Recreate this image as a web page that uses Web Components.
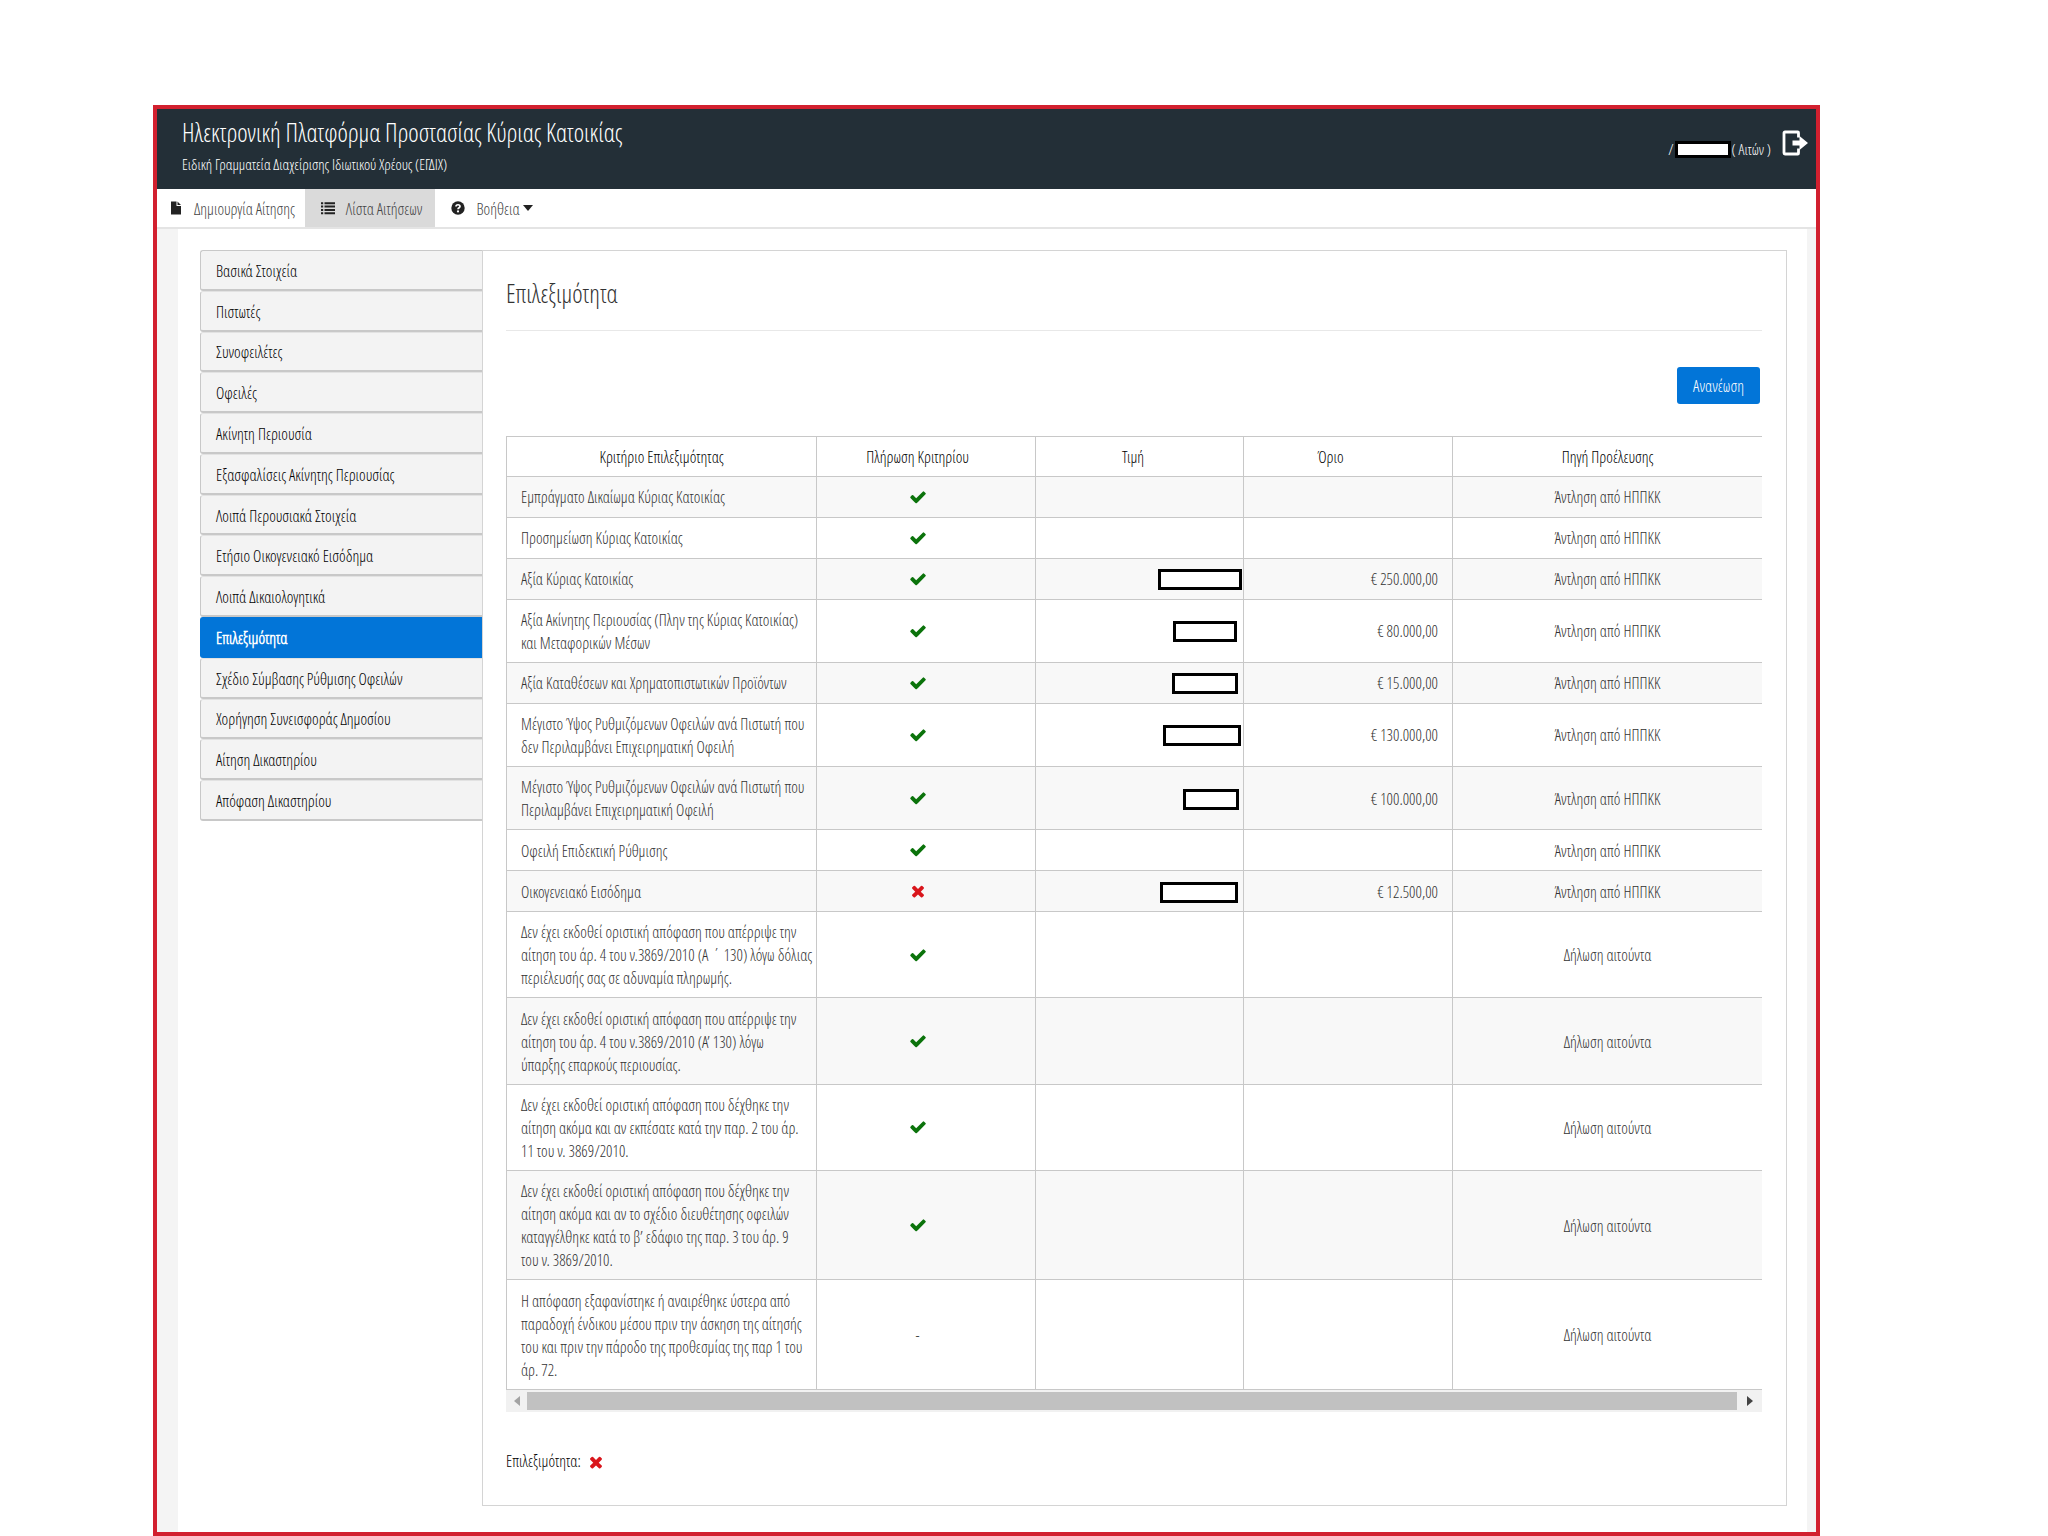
<!DOCTYPE html>
<html lang="el">
<head>
<meta charset="utf-8">
<meta name="viewport" content="width=device-width, initial-scale=1">
<title>Ηλεκτρονική Πλατφόρμα Προστασίας Κύριας Κατοικίας</title>
<style>
  body {
    margin: 0;
    background: #fff;
    color: #333;
    font: 16px/23px "Open Sans Condensed Light", "Open Sans Condensed", "Open Sans", sans-serif;
    --line: #c8c8c8;
    --accent: #0275d8;
    --frame: #d2202f;
  }
</style>
</head>
<body>
<platform-app></platform-app>

<script>
const define = (name, html, setup) => {
  const tpl = document.createElement('template');
  tpl.innerHTML = html;
  customElements.define(name, class extends HTMLElement {
    connectedCallback() {
      if (this.shadowRoot) return;
      const root = this.attachShadow({ mode: 'open' });
      root.append(tpl.content.cloneNode(true));
      if (setup) setup(this, root);
    }
  });
};

/* Icons */
const ICONS = {
  check: ['0 0 1792 1792', '<path d="M1671 566q0 40-28 68l-724 724-136 136q-28 28-68 28t-68-28l-136-136-362-362q-28-28-28-68t28-68l136-136q28-28 68-28t68 28l294 295 656-657q28-28 68-28t68 28l136 136q28 28 28 68z"/>'],
  times: ['0 0 1792 1792', '<path d="M1490 1322q0 40-28 68l-136 136q-28 28-68 28t-68-28l-294-294-294 294q-28 28-68 28t-68-28l-136-136q-28-28-28-68t28-68l294-294-294-294q-28-28-28-68t28-68l136-136q28-28 68-28t68 28l294 294 294-294q28-28 68-28t68 28l136 136q28 28 28 68t-28 68l-294 294 294 294q28 28 28 68z"/>'],
  file: ['0 0 14 14', '<path d="M2 .5h5.500v4.500h4.500v8.500h-10zM8.500.500l3.500 3.500h-3.500z"/>'],
  list: ['0 0 14 14', '<path d="M0 1.300h2.200v2H0zM3.500 1.300H14v2H3.500zM0 4.600h2.200v2H0zM3.500 4.600H14v2H3.500zM0 7.900h2.200v2H0zM3.500 7.900H14v2H3.500zM0 11.200h2.200v2H0zM3.500 11.200H14v2H3.500z"/>'],
  help: ['0 0 14 14', '<circle cx="7" cy="7" r="6.700"/><path d="M5 5.400C5 3.200 9 3.200 9 5.400 9 6.800 7 6.700 7 8.300" fill="none" stroke="#fff" stroke-width="1.700"/><circle cx="7" cy="10.400" r="1.100" fill="#fff"/>'],
  caret: ['0 0 10 6', '<path d="M0 0h10l-5 6z"/>'],
  exit: ['0 0 26 26', '<path d="M16.500 7.500V2.800Q16.500 2 15.700 2H3Q2 2 2 3v20Q2 24 3 24h12.700Q16.500 24 16.500 23.200V18.500" fill="none" stroke="currentColor" stroke-width="2.800"/><path d="M10.500 10.500H17.500V6L26 13l-8.500 7v-4.500H10.500z"/>'],
  left: ['0 0 6 10', '<path d="M6 0v10L0 5z"/>'],
  right: ['0 0 6 10', '<path d="M0 0v10l6-5z"/>']
};
define('ui-icon', `<style>
  :host { display: inline-flex; width: 18px; height: 18px; }
  svg { width: 100%; height: 100%; display: block; fill: currentColor; }
</style>`, (el, root) => {
  const [box, body] = ICONS[el.getAttribute('name')];
  root.innerHTML += `<svg viewBox="${box}" aria-hidden="true">${body}</svg>`;
});

/* Blanked-out value */
define('redacted-value', `<style>
  :host { display: block; box-sizing: border-box; border: 3px solid #000; background: #fff; height: 21px; }
</style>`, (el) => {
  el.style.width = el.getAttribute('width') + 'px';
});

define('platform-header', `<style>
  :host { display: flex; justify-content: space-between; box-sizing: border-box; height: 80px; padding: 6px 8px 0 25px; background: #232f37; color: #fff; }
  h1 { margin: 0 0 4px; font-size: 25px; line-height: 34px; font-weight: inherit; }
  p { margin: 0; font-size: 15px; line-height: 22px; }
  .user { display: flex; align-items: center; height: 60px; padding-top: 8px; font-size: 15px; line-height: 22px; box-sizing: border-box; }
  redacted-value { height: 17px; margin: 0 1px; }
  button { all: unset; display: flex; margin: 0 0 12px 11px; color: #fff; cursor: pointer; }
  button ui-icon { width: 26px; height: 26px; }
</style>
<div><h1>Ηλεκτρονική Πλατφόρμα Προστασίας Κύριας Κατοικίας</h1>
<p>Ειδική Γραμματεία Διαχείρισης Ιδιωτικού Χρέους (ΕΓΔΙΧ)</p></div>
<div class="user"><span>/</span><redacted-value width="56"></redacted-value><span>( Αιτών )</span>
<button type="button" aria-label="Έξοδος"><ui-icon name="exit"></ui-icon></button></div>`);

define('nav-item', `<style>
  :host { display: flex; }
  a { display: flex; align-items: center; padding: 2px 10px 0 12px; color: #444; text-decoration: none; }
  :host([active]) a { background: #dadada; padding: 2px 13px 0 16px; }
  ui-icon { color: #222; margin-bottom: 2px; }
  .icon { width: 14px; height: 14px; margin-right: 11px; }
  .caret { width: 10px; height: 6px; margin-left: 3px; }
</style><a href="#"><slot></slot></a>`, (el, root) => {
  const a = root.querySelector('a');
  a.insertAdjacentHTML('afterbegin', `<ui-icon class="icon" name="${el.getAttribute('icon')}"></ui-icon>`);
  if (el.hasAttribute('menu')) a.insertAdjacentHTML('beforeend', '<ui-icon class="caret" name="caret"></ui-icon>');
});

define('platform-nav', `<style>
  :host { display: block; background: #fff; border-bottom: 2px solid #e4e4e4; }
  nav { display: flex; height: 38px; }
  nav-item[menu] { margin-left: 4px; }
</style><nav><nav-item icon="file">Δημιουργία Αίτησης</nav-item><nav-item icon="list" active>Λίστα Αιτήσεων</nav-item><nav-item icon="help" menu>Βοήθεια</nav-item></nav>`);

const STEPS = ['Βασικά Στοιχεία', 'Πιστωτές', 'Συνοφειλέτες', 'Οφειλές', 'Ακίνητη Περιουσία',
  'Εξασφαλίσεις Ακίνητης Περιουσίας', 'Λοιπά Περουσιακά Στοιχεία', 'Ετήσιο Οικογενειακό Εισόδημα',
  'Λοιπά Δικαιολογητικά', 'Επιλεξιμότητα', 'Σχέδιο Σύμβασης Ρύθμισης Οφειλών',
  'Χορήγηση Συνεισφοράς Δημοσίου', 'Αίτηση Δικαστηρίου', 'Απόφαση Δικαστηρίου'];
define('step-menu', `<style>
  :host { display: block; }
  ul { list-style: none; margin: 0; padding: 0; display: flex; flex-direction: column; height: 571px; }
  li { flex: 1; display: flex; }
  a { flex: 1; display: flex; align-items: center; padding: 3px 15px 0; color: #000; text-decoration: none;
      background: #f3f3f3; border: 1px solid var(--line); border-bottom-width: 2px; border-right: 0; border-top-color: #e2e2e2; border-radius: 3px 0 0 3px; }
  li:first-child a { border-top-color: var(--line); }
  a[aria-current] { background: var(--accent); border-color: var(--accent); color: #fff; font-weight: bold; }
</style><ul></ul>`, (el, root) => {
  root.querySelector('ul').innerHTML = STEPS.map(s =>
    `<li><a href="#"${s === 'Επιλεξιμότητα' ? ' aria-current="step"' : ''}>${s}</a></li>`).join('');
});

/* criterion, fulfilled, [hidden value width, right margin], limit, source */
const PULL = 'Άντληση από ΗΠΠΚΚ', DECL = 'Δήλωση αιτούντα';
const ROWS = [
  ['Εμπράγματο Δικαίωμα Κύριας Κατοικίας', 'check', null, '', PULL],
  ['Προσημείωση Κύριας Κατοικίας', 'check', null, '', PULL],
  ['Αξία Κύριας Κατοικίας', 'check', [84, 1], '€ 250.000,00', PULL],
  ['Αξία Ακίνητης Περιουσίας (Πλην της Κύριας Κατοικίας)<br>και Μεταφορικών Μέσων', 'check', [64, 6], '€ 80.000,00', PULL],
  ['Αξία Καταθέσεων και Χρηματοπιστωτικών Προϊόντων', 'check', [66, 5], '€ 15.000,00', PULL],
  ['Μέγιστο Ύψος Ρυθμιζόμενων Οφειλών ανά Πιστωτή που<br>δεν Περιλαμβάνει Επιχειρηματική Οφειλή', 'check', [78, 2], '€ 130.000,00', PULL],
  ['Μέγιστο Ύψος Ρυθμιζόμενων Οφειλών ανά Πιστωτή που<br>Περιλαμβάνει Επιχειρηματική Οφειλή', 'check', [56, 4], '€ 100.000,00', PULL],
  ['Οφειλή Επιδεκτική Ρύθμισης', 'check', null, '', PULL],
  ['Οικογενειακό Εισόδημα', 'times', [78, 5], '€ 12.500,00', PULL],
  ['Δεν έχει εκδοθεί οριστική απόφαση που απέρριψε την<br>αίτηση του άρ. 4 του ν.3869/2010 (Α ΄ 130) λόγω δόλιας<br>περιέλευσής σας σε αδυναμία πληρωμής.', 'check', null, '', DECL],
  ['Δεν έχει εκδοθεί οριστική απόφαση που απέρριψε την<br>αίτηση του άρ. 4 του ν.3869/2010 (Α’ 130) λόγω<br>ύπαρξης επαρκούς περιουσίας.', 'check', null, '', DECL],
  ['Δεν έχει εκδοθεί οριστική απόφαση που δέχθηκε την<br>αίτηση ακόμα και αν εκπέσατε κατά την παρ. 2 του άρ.<br>11 του ν. 3869/2010.', 'check', null, '', DECL],
  ['Δεν έχει εκδοθεί οριστική απόφαση που δέχθηκε την<br>αίτηση ακόμα και αν το σχέδιο διευθέτησης οφειλών<br>καταγγέλθηκε κατά το β’ εδάφιο της παρ. 3 του άρ. 9<br>του ν. 3869/2010.', 'check', null, '', DECL],
  ['Η απόφαση εξαφανίστηκε ή αναιρέθηκε ύστερα από<br>παραδοχή ένδικου μέσου πριν την άσκηση της αίτησής<br>του και πριν την πάροδο της προθεσμίας της παρ 1 του<br>άρ. 72.', '', null, '', DECL]
];
define('criteria-table', `<style>
  :host { display: block; overflow: hidden; }
  table { width: 100%; height: 954px; table-layout: fixed; border-collapse: collapse; }
  th, td { border: 1px solid var(--line); padding: 9px 14px 7px; text-align: center; vertical-align: middle; white-space: nowrap; }
  th:last-child, td:last-child { border-right: 0; }
  th { color: #000; font-weight: inherit; }
  th:nth-child(2), td:nth-child(2) { padding-right: 31px; }
  th:nth-child(3) { padding-right: 27px; }
  th:nth-child(4) { padding-right: 49px; }
  td:nth-child(1) { text-align: left; padding-right: 0; }
  td:nth-child(3) { padding: 2px 0 0; }
  td:nth-child(4) { text-align: right; }
  tbody tr:nth-child(odd) { background: #f8f8f8; }
  ui-icon { vertical-align: middle; margin-bottom: 4px; }
  ui-icon[name=check] { color: #0b730b; }
  ui-icon[name=times] { color: #d9161c; }
  redacted-value { margin-left: auto; }
</style>
<table><colgroup><col style="width:310px"><col style="width:219px"><col style="width:208px"><col style="width:209px"><col></colgroup>
<thead><tr><th scope="col">Κριτήριο Επιλεξιμότητας</th><th scope="col">Πλήρωση Κριτηρίου</th><th scope="col">Τιμή</th><th scope="col">Όριο</th><th scope="col">Πηγή Προέλευσης</th></tr></thead>
<tbody></tbody></table>`, (el, root) => {
  root.querySelector('tbody').innerHTML = ROWS.map(([name, mark, hidden, limit, source]) =>
    `<tr><td>${name}</td><td>${mark ? `<ui-icon name="${mark}"></ui-icon>` : '-'}</td><td>${
      hidden ? `<redacted-value width="${hidden[0]}" style="margin-right:${hidden[1]}px"></redacted-value>` : ''
    }</td><td>${limit}</td><td>${source}</td></tr>`).join('');
});

define('scroll-track', `<style>
  :host { display: flex; align-items: center; height: 22px; background: #f1f1f1; }
  button { all: unset; display: flex; align-items: center; justify-content: center; width: 21px; height: 22px; color: #a3a3a3; }
  button:last-child { width: 25px; color: #444; }
  ui-icon { width: 6px; height: 10px; }
  .thumb { flex: 1; height: 18px; background: #c1c1c1; }
</style><button type="button" aria-label="Αριστερά"><ui-icon name="left"></ui-icon></button><div class="thumb"></div><button type="button" aria-label="Δεξιά"><ui-icon name="right"></ui-icon></button>`);

define('eligibility-panel', `<style>
  :host { display: flex; flex-direction: column; box-sizing: border-box; border: 1px solid #d4d4d4; padding: 25px 24px 0 23px; background: #fff; }
  h2 { margin: 0; padding-bottom: 20px; border-bottom: 1px solid #e8e8e8; font-size: 25px; line-height: 34px; font-weight: inherit; }
  .tools { display: flex; justify-content: flex-end; margin: 36px 2px 32px 0; }
  button { width: 83px; height: 37px; padding: 2px 0 0; border: 0; border-radius: 3px; background: var(--accent); color: #fff; font: inherit; }
  .result { display: flex; align-items: center; gap: 6px; margin: 38px 0 0; color: #000; }
  .result ui-icon { color: #d9161c; }
</style>
<h2>Επιλεξιμότητα</h2>
<div class="tools"><button type="button">Ανανέωση</button></div>
<criteria-table></criteria-table>
<scroll-track></scroll-track>
<p class="result">Επιλεξιμότητα: <ui-icon name="times"></ui-icon></p>`);

define('platform-app', `<style>
  :host { display: flex; flex-direction: column; box-sizing: border-box; min-height: 100vh; padding: 105px 228px 0 153px; }
  .frame { flex: 1; display: flex; flex-direction: column; border: 4px solid var(--frame); }
  main { flex: 1; display: flex; padding: 21px 20px 26px 22px; background: #fff; border: solid #f4f4f4; border-width: 0 9px 0 21px; }
  step-menu { flex: 0 0 282px; }
  eligibility-panel { flex: 1; min-width: 0; }
</style>
<div class="frame"><platform-header></platform-header><platform-nav></platform-nav>
<main><step-menu></step-menu><eligibility-panel></eligibility-panel></main></div>`);
</script>
</body>
</html>
